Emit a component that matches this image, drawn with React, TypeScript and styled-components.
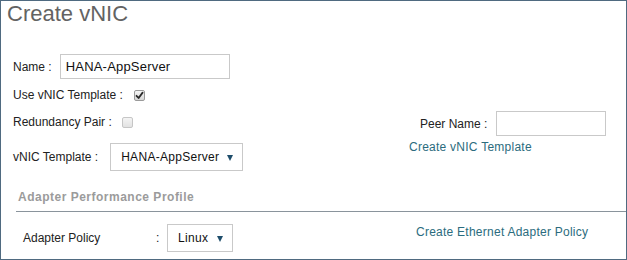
import React from "react";
import styled, { createGlobalStyle } from "styled-components";

const Global = createGlobalStyle`
  html, body { margin: 0; padding: 0; background: #fff; }
  body { font-family: "Liberation Sans", Arial, sans-serif; color: #222; }
`;

const Frame = styled.div`
  width: 627px;
  height: 260px;
  box-sizing: border-box;
  border: 1px solid #4f6a80;
  display: flex;
  flex-direction: column;
  overflow: hidden;
`;

const Title = styled.h1`
  margin: 0;
  padding-left: 6px;
  font-size: 22px;
  line-height: 26px;
  font-weight: normal;
  color: #636363;
`;

const TwoCol = styled.div<{ $top?: number }>`
  display: grid;
  grid-template-columns: 408px 1fr;
  margin-top: ${(p) => p.$top ?? 0}px;
`;

const Column = styled.div`
  display: flex;
  flex-direction: column;
`;

const Row = styled.div<{ $top: number; $h: number; $left?: number }>`
  display: flex;
  align-items: center;
  margin-top: ${(p) => p.$top}px;
  height: ${(p) => p.$h}px;
  padding-left: ${(p) => p.$left ?? 12}px;
  font-size: 12px;
`;

const Label = styled.span<{ $w?: number }>`
  font-size: 12px;
  line-height: 14px;
  color: #222;
  white-space: nowrap;
  ${(p) => (p.$w ? `width: ${p.$w}px; flex: none;` : "")}
`;

const TextInput = styled.div<{ $w: number; $gap: number }>`
  box-sizing: border-box;
  width: ${(p) => p.$w}px;
  height: 25px;
  margin-left: ${(p) => p.$gap}px;
  border: 1px solid #c9c9c9;
  background: #fff;
  display: flex;
  align-items: center;
  padding-left: 5px;
  font-size: 13px;
  letter-spacing: 0.2px;
  color: #111;
`;

const Check = styled.span<{ $on?: boolean; $gap: number }>`
  box-sizing: border-box;
  width: 11px;
  height: 11px;
  margin-left: ${(p) => p.$gap}px;
  border: 1px solid ${(p) => (p.$on ? "#9a9a9a" : "#c6c6c6")};
  border-radius: 2px;
  background: ${(p) =>
    p.$on ? "linear-gradient(#f6f6f6, #d6d6d6)" : "linear-gradient(#f4f4f4, #e2e2e2)"};
  display: flex;
  align-items: center;
  justify-content: center;
  flex: none;
`;

const Select = styled.div<{ $w: number; $gap: number }>`
  box-sizing: border-box;
  width: ${(p) => p.$w}px;
  height: 28px;
  margin-left: ${(p) => p.$gap}px;
  border: 1px solid #c9c9c9;
  background: #fff;
  display: flex;
  align-items: center;
  justify-content: space-between;
  padding: 0 9px 0 10px;
  font-size: 12px;
  letter-spacing: 0.3px;
  color: #111;
  flex: none;
`;

const Arrow = styled.span`
  width: 0;
  height: 0;
  border-left: 3.5px solid transparent;
  border-right: 3.5px solid transparent;
  border-top: 6px solid #1e4d6b;
  margin-top: 2px;
`;

const Link = styled.a<{ $top: number; $left: number }>`
  display: block;
  margin-top: ${(p) => p.$top}px;
  padding-left: ${(p) => p.$left}px;
  font-size: 12px;
  line-height: 14px;
  letter-spacing: 0.25px;
  color: #2b6c7e;
  text-decoration: none;
  white-space: nowrap;
`;

const SectionHeading = styled.div`
  margin-top: 18px;
  padding-left: 17px;
  font-size: 12px;
  line-height: 16px;
  font-weight: bold;
  letter-spacing: 0.5px;
  color: #9b9b9b;
`;

const Divider = styled.div`
  margin: 6px 0 0 15px;
  height: 1px;
  background: #8a949c;
`;

const Colon = styled.span`
  width: 11px;
  font-size: 12px;
  color: #222;
  flex: none;
`;

const CheckMark = () => (
  <svg width="9" height="9" viewBox="0 0 9 9">
    <path d="M1.5 4.8 L3.6 7 L7.6 1.6" stroke="#2a2a2a" strokeWidth="1.8" fill="none" strokeLinecap="round" strokeLinejoin="round" />
  </svg>
);

export default function App() {
  return (
    <>
      <Global />
      <Frame>
        <Title>Create vNIC</Title>
        <TwoCol>
          <Column>
            <Row $top={27} $h={25}>
              <Label>Name :</Label>
              <TextInput $w={170} $gap={8}>HANA-AppServer</TextInput>
            </Row>
            <Row $top={6} $h={20}>
              <Label>Use vNIC Template :</Label>
              <Check $on $gap={11}>
                <CheckMark />
              </Check>
            </Row>
            <Row $top={7} $h={20}>
              <Label>Redundancy Pair :</Label>
              <Check $gap={10} />
            </Row>
            <Row $top={11} $h={28}>
              <Label>vNIC Template :</Label>
              <Select $w={133} $gap={12}>
                <span>HANA-AppServer</span>
                <Arrow />
              </Select>
            </Row>
          </Column>
          <Column>
            <Row $top={84} $h={25} $left={11}>
              <Label>Peer Name :</Label>
              <TextInput $w={110} $gap={9} />
            </Row>
            <Link href="#" $top={4} $left={0}>
              Create vNIC Template
            </Link>
          </Column>
        </TwoCol>
        <SectionHeading>Adapter Performance Profile</SectionHeading>
        <Divider />
        <TwoCol $top={12}>
          <Row $top={0} $h={28} $left={22}>
            <Label $w={133}>Adapter Policy</Label>
            <Colon>:</Colon>
            <Select $w={66} $gap={0}>
              <span>Linux</span>
              <Arrow />
            </Select>
          </Row>
          <Link href="#" $top={1} $left={7}>
            Create Ethernet Adapter Policy
          </Link>
        </TwoCol>
      </Frame>
    </>
  );
}
